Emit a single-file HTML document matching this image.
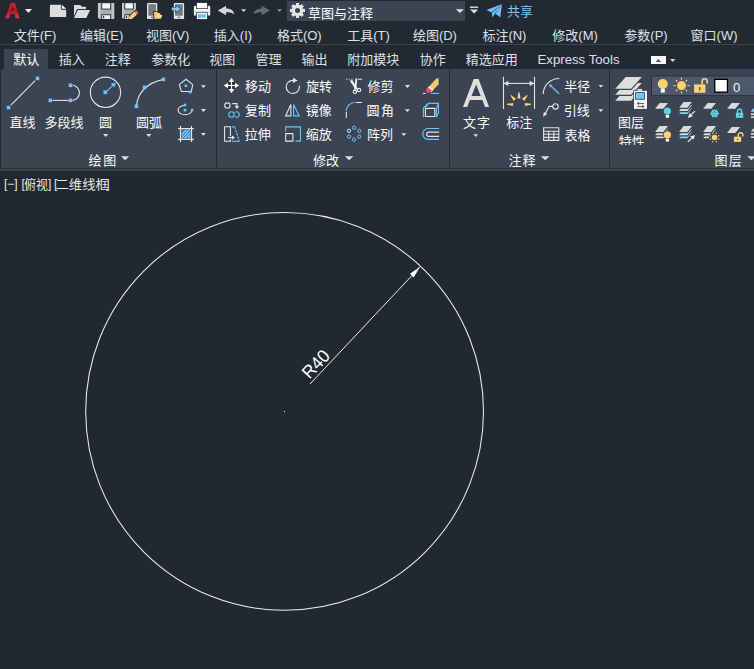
<!DOCTYPE html>
<html lang="zh"><head><meta charset="utf-8"><title>AutoCAD</title>
<style>
html,body{margin:0;padding:0;background:#212830;}
body{width:754px;height:669px;overflow:hidden;position:relative;font-family:"Liberation Sans","Noto Sans CJK SC",sans-serif;}
svg{position:absolute;left:0;top:0;display:block}
.t span{position:absolute;font-size:13px;line-height:14px;white-space:nowrap;color:transparent;opacity:0}
text{font-family:"Liberation Sans","Noto Sans CJK SC",sans-serif}
</style></head><body>
<div class="t"><span style="left:308px;top:5px">草图与注释</span><span style="left:507px;top:4px">共享</span><span style="left:14px;top:28px">文件(F)</span><span style="left:80px;top:28px">编辑(E)</span><span style="left:146px;top:28px">视图(V)</span><span style="left:214px;top:28px">插入(I)</span><span style="left:277px;top:28px">格式(O)</span><span style="left:348px;top:28px">工具(T)</span><span style="left:413px;top:28px">绘图(D)</span><span style="left:482px;top:28px">标注(N)</span><span style="left:552px;top:28px">修改(M)</span><span style="left:624px;top:28px">参数(P)</span><span style="left:691px;top:28px">窗口(W)</span><span style="left:13px;top:51px">默认</span><span style="left:59px;top:51px">插入</span><span style="left:105px;top:51px">注释</span><span style="left:152px;top:51px">参数化</span><span style="left:210px;top:51px">视图</span><span style="left:256px;top:51px">管理</span><span style="left:302px;top:51px">输出</span><span style="left:348px;top:51px">附加模块</span><span style="left:420px;top:51px">协作</span><span style="left:466px;top:51px">精选应用</span><span style="left:538px;top:51px">Express Tools</span><span style="left:10px;top:115px">直线</span><span style="left:45px;top:115px">多段线</span><span style="left:100px;top:115px">圆</span><span style="left:137px;top:115px">圆弧</span><span style="left:89px;top:153px">绘图</span><span style="left:245px;top:79px">移动</span><span style="left:245px;top:103px">复制</span><span style="left:245px;top:127px">拉伸</span><span style="left:306px;top:79px">旋转</span><span style="left:306px;top:103px">镜像</span><span style="left:306px;top:127px">缩放</span><span style="left:367px;top:79px">修剪</span><span style="left:367px;top:103px">圆角</span><span style="left:367px;top:127px">阵列</span><span style="left:313px;top:153px">修改</span><span style="left:463px;top:116px">文字</span><span style="left:506px;top:116px">标注</span><span style="left:565px;top:79px">半径</span><span style="left:565px;top:103px">引线</span><span style="left:565px;top:127px">表格</span><span style="left:509px;top:153px">注释</span><span style="left:619px;top:115px">图层</span><span style="left:619px;top:134px">特性</span><span style="left:733px;top:81px">0</span><span style="left:715px;top:153px">图层</span><span style="left:4px;top:177px">[−][俯视][二维线框]</span><span style="left:300px;top:360px">R40</span></div>
<svg width="754" height="669" viewBox="0 0 754 669">
<rect x="0" y="0" width="754" height="669" fill="#212830"/><rect x="0" y="0" width="754" height="69" fill="#222933"/><rect x="0" y="44" width="754" height="1" fill="#3a4352"/><rect x="0" y="69" width="754" height="102" fill="#3b4453"/><rect x="0" y="69" width="1" height="99" fill="#222933"/><rect x="0" y="168" width="754" height="1" fill="#2a313d"/><rect x="216" y="70" width="1" height="97" fill="#222933"/><rect x="449" y="70" width="1" height="97" fill="#222933"/><rect x="609" y="70" width="1" height="97" fill="#222933"/><rect x="4" y="49" width="44" height="21" fill="#3b4453"/><linearGradient id="lg" x1="0" y1="0" x2="0" y2="1"><stop offset="0" stop-color="#cf2029"/><stop offset=".55" stop-color="#b01a24"/><stop offset="1" stop-color="#d43c47"/></linearGradient><path fill-rule="evenodd" d="M5.3 18.2L10.6 3.1H15.1L19.5 18.2H15.7L14.6 14H10.3L9.1 18.2ZM11 10.5L12.5 6.3L13.9 10.3Z" fill="url(#lg)"/><path d="M24.9 9.1H32L28.45 13.1Z" fill="#e6e6e6"/><path d="M49.9 4.8H61.2V9.7H66.2V17.1H49.9Z" fill="#dcdcdc"/><path d="M62 4.9L66.2 8.7H62Z" fill="#fafafa"/><path d="M74 16.5V5H80.2L82 6.7H86V9.2H77Z" fill="#dcdcdc"/><path d="M77.2 9.2H91.2L87 18.7H73.2L74.4 16Z" fill="#222933"/><path d="M77.8 10H90.1L86.3 18H74Z" fill="#dedede"/><path d="M97.9 2.9h16.4v16.1H99.5L97.9 17.4z" fill="#c6c6c6"/><rect x="100.30000000000001" y="2.9" width="11.599999999999998" height="16.1" fill="#adadad"/><rect x="101.3" y="2.9" width="9.8" height="6.6" fill="#262c36"/><rect x="102.2" y="3.2" width="8" height="5.4" fill="#f6f6f6"/><rect x="101.3" y="14.3" width="9.8" height="4.7" fill="#262c36"/><rect x="102.2" y="15.2" width="8" height="3.8" fill="#f2f2f2"/><rect x="103.10000000000001" y="15.9" width="1.1" height="2.4" fill="#2a2a2a"/><path d="M122 2.9h14v16.1H123.6L122 17.4z" fill="#c6c6c6"/><rect x="124.4" y="2.9" width="9.2" height="16.1" fill="#adadad"/><rect x="124.3" y="2.9" width="9.5" height="6.6" fill="#262c36"/><rect x="125.2" y="3.2" width="7.7" height="5.4" fill="#f6f6f6"/><rect x="124.3" y="14.3" width="6.8" height="4.7" fill="#262c36"/><rect x="125.2" y="15.2" width="5" height="3.8" fill="#f2f2f2"/><rect x="126.10000000000001" y="15.9" width="1.1" height="2.4" fill="#2a2a2a"/><path d="M130.6 19.2H136.3V13.2Z" fill="#222933"/><g transform="translate(128.9 19.2) rotate(-42)"><path d="M-.6 0l3-2.7h9.4v5.4h-9.4z" fill="#262c36"/><path d="M.3 0l2.4-1.9h6.6v3.8H2.7z" fill="#f6cd6e"/><path d="M9.3-1.9h2.2v3.8H9.3z" fill="#f25562"/><path d="M.3 0l1.5-1.2v2.4z" fill="#fff"/></g><rect x="147" y="2.9" width="10.3" height="16.2" rx="1.2" fill="#e4e4e4"/><rect x="148.3" y="4.2" width="7.7" height="11.5" fill="#7a7a7a"/><rect x="150.9" y="16.8" width="2.5" height="1" rx=".5" fill="#444"/><path d="M153.3 19.6v-8.4h4.2l1 1.1h2.6v2.1h2.4l-2 5.2z" fill="#222933"/><path d="M154.1 18.8v-6.9h3l1 1.1h2.2v1.9h-4.5z" fill="#f3cf74"/><path d="M155.9 15h6.5l-1.5 3.8h-6.7z" fill="#f9da86"/><rect x="173.8" y="2.9" width="10.3" height="16.2" rx="1.2" fill="#e4e4e4"/><rect x="175.10000000000002" y="4.2" width="7.7" height="11.5" fill="#7a7a7a"/><rect x="177.70000000000002" y="16.8" width="2.5" height="1" rx=".5" fill="#444"/><path d="M171.2 6.9h4.3v-2l6.3 4.1-6.3 4.1v-2h-4.3z" fill="#222933"/><path d="M171.8 7.5h4.4v-1.6l4.7 3.1-4.7 3.1v-1.6h-4.4z" fill="#79cdfd"/><path d="M193.9 7q0-1.3 1.3-1.3h13.7q1.3 0 1.3 1.3v8.6h-16.3z" fill="#f4f4f4"/><rect x="193.9" y="10.8" width="16.3" height="1.9" fill="#dedede"/><rect x="196.2" y="2.4" width="11.6" height="6.6" fill="#222933"/><rect x="196.9" y="2.9" width="10.2" height="5.4" fill="#fbfbfb"/><rect x="196.1" y="12.4" width="11.7" height="7.2" fill="#222933"/><rect x="196.8" y="13" width="10.3" height="6.1" fill="#fbfbfb"/><rect x="198.1" y="14.1" width="7.9" height="3.7" fill="#72c4fb"/><path d="M217.9 10.5l8.2-4.7v2.6c5 .1 7.6 1.8 8.2 6.2-1.8-1.8-4-2.3-8.2-2.3v2.9z" fill="#d6d6d6"/><path d="M241 9.2H246.3L243.65 12Z" fill="#d4d4d4"/><path d="M269.9 10.5l-8.2-4.7v2.6c-5 .1-7.6 1.8-8.2 6.2 1.8-1.8 4-2.3 8.2-2.3v2.9z" fill="#626b7a"/><path d="M277 9.2H282L279.5 12Z" fill="#8a909c"/><rect x="287" y="1" width="178" height="20" fill="#3b4453"/><circle cx="297.5" cy="10.5" r="6.5" fill="none" stroke="#272e3b" stroke-width="2.2"/><rect x="-1.7" y="-7.5" width="3.4" height="4" transform="translate(297.5 10.5) rotate(0)" fill="#e4e4e4"/><rect x="-1.7" y="-7.5" width="3.4" height="4" transform="translate(297.5 10.5) rotate(45)" fill="#e4e4e4"/><rect x="-1.7" y="-7.5" width="3.4" height="4" transform="translate(297.5 10.5) rotate(90)" fill="#e4e4e4"/><rect x="-1.7" y="-7.5" width="3.4" height="4" transform="translate(297.5 10.5) rotate(135)" fill="#e4e4e4"/><rect x="-1.7" y="-7.5" width="3.4" height="4" transform="translate(297.5 10.5) rotate(180)" fill="#e4e4e4"/><rect x="-1.7" y="-7.5" width="3.4" height="4" transform="translate(297.5 10.5) rotate(225)" fill="#e4e4e4"/><rect x="-1.7" y="-7.5" width="3.4" height="4" transform="translate(297.5 10.5) rotate(270)" fill="#e4e4e4"/><rect x="-1.7" y="-7.5" width="3.4" height="4" transform="translate(297.5 10.5) rotate(315)" fill="#e4e4e4"/><circle cx="297.5" cy="10.5" r="4.1" fill="none" stroke="#e4e4e4" stroke-width="3.2"/><text x="307.9" y="17.8" font-size="13" fill="#ffffff">草图与注释</text><path d="M455.9 9.2H463.9L459.9 13Z" fill="#e0e0e0"/><rect x="470" y="6.5" width="8.2" height="1.4" fill="#e0e0e0"/><path d="M470 9.4H478.2L474.1 13.5Z" fill="#e0e0e0"/><path d="M502 4L486.5 10L491.3 12.5Z M502 4.3L491.8 13.1L492.3 17.5L494.9 13.7Z M502 4.5L495.5 13.6L500.2 17.5Z" fill="#6cc2f8"/><text x="506.9" y="16.05" font-size="13" fill="#7ccaf8">共享</text><text x="13.7" y="40.15" font-size="13" fill="#dde1e6">文件(F)</text><text x="79.9" y="40.15" font-size="13" fill="#dde1e6">编辑(E)</text><text x="146" y="40.15" font-size="13" fill="#dde1e6">视图(V)</text><text x="213.8" y="40.15" font-size="13" fill="#dde1e6">插入(I)</text><text x="276.9" y="40.15" font-size="13" fill="#dde1e6">格式(O)</text><text x="347.2" y="40.15" font-size="13" fill="#dde1e6">工具(T)</text><text x="412.9" y="40.15" font-size="13" fill="#dde1e6">绘图(D)</text><text x="482.4" y="40.15" font-size="13" fill="#dde1e6">标注(N)</text><text x="552.3" y="40.15" font-size="13" fill="#dde1e6">修改(M)</text><text x="624.3" y="40.15" font-size="13" fill="#dde1e6">参数(P)</text><text x="690.6" y="40.15" font-size="13" fill="#dde1e6">窗口(W)</text><text x="13.2" y="63.9" font-size="13" fill="#ffffff">默认</text><text x="58.8" y="63.9" font-size="13" fill="#dde1e6">插入</text><text x="104.8" y="63.9" font-size="13" fill="#dde1e6">注释</text><text x="151.3" y="63.9" font-size="13" fill="#dde1e6">参数化</text><text x="209.3" y="63.9" font-size="13" fill="#dde1e6">视图</text><text x="255.6" y="63.9" font-size="13" fill="#dde1e6">管理</text><text x="301.4" y="63.9" font-size="13" fill="#dde1e6">输出</text><text x="347.3" y="63.9" font-size="13" fill="#dde1e6">附加模块</text><text x="419.7" y="63.9" font-size="13" fill="#dde1e6">协作</text><text x="465.8" y="63.9" font-size="13" fill="#dde1e6">精选应用</text><text x="537.5" y="63.9" font-size="13.3" fill="#dde1e6" textLength="82" lengthAdjust="spacingAndGlyphs">Express Tools</text><rect x="651" y="56" width="15" height="8" fill="#f8f8f8"/><path d="M655.8 61.9h5.4l-2.7-2.9z" fill="#555"/><path d="M670.1 59H675.3L672.7 62.1Z" fill="#d8d8d8"/><path d="M10.9 105.2L35.1 80.7" stroke="#e4e4e4" stroke-width="1.1" fill="none"/><rect x="35.7" y="76.6" width="3.6" height="3.6" fill="#6cc4ff"/><rect x="6.7" y="105.8" width="3.6" height="3.6" fill="#6cc4ff"/><text x="9.6" y="127.05" font-size="13" fill="#fbfbfb">直线</text><path d="M52.6 100.4L68.4 100.4" stroke="#e4e4e4" stroke-width="1.1" fill="none"/><path d="M72.7 100.4A7.6 7.6 0 0 0 72.7 85.3" stroke="#e4e4e4" stroke-width="1.1" fill="none"/><rect x="48.5" y="98.6" width="3.6" height="3.6" fill="#6cc4ff"/><rect x="68.7" y="98.6" width="3.6" height="3.6" fill="#6cc4ff"/><rect x="68.7" y="83.5" width="3.6" height="3.6" fill="#6cc4ff"/><text x="44.5" y="127.05" font-size="13" fill="#fbfbfb">多段线</text><circle cx="105.5" cy="92.3" r="15.15" fill="none" stroke="#e4e4e4" stroke-width="1.1"/><path d="M105.5 92.3L114.6 83.6" stroke="#6cc4ff" stroke-width="1.15" fill="none"/><path d="M115.6 82.7l-1.2 4.6-3.4-3.5z" stroke="#6cc4ff" stroke-width="0.3" fill="#6cc4ff"/><rect x="103.5" y="90.5" width="3.6" height="3.6" fill="#6cc4ff"/><text x="98.9" y="127.05" font-size="13" fill="#fbfbfb">圆</text><path d="M103.1 134.1H108.3L105.69999999999999 137Z" fill="#dde1e6"/><path d="M136.4 106.3Q138.5 85 163.4 79.4" stroke="#e4e4e4" stroke-width="1.1" fill="none"/><rect x="161.6" y="77.6" width="3.6" height="3.6" fill="#6cc4ff"/><rect x="142.7" y="85.6" width="3.6" height="3.6" fill="#6cc4ff"/><rect x="134.6" y="104.5" width="3.6" height="3.6" fill="#6cc4ff"/><text x="135.9" y="127.05" font-size="13" fill="#fbfbfb">圆弧</text><path d="M146.2 134.1H151.4L148.8 137Z" fill="#dde1e6"/><path d="M186.1 79.3L192.7 84.6L191.3 91.5H181.4L179.3 84.6Z" stroke="#e4e4e4" stroke-width="1.1" fill="none"/><rect x="184.6" y="84.5" width="2.6" height="2.6" fill="#6cc4ff"/><rect x="188.8" y="90.6" width="2.8" height="2.8" fill="#6cc4ff"/><path d="M200.9 85.2H205.9L203.4 87.9Z" fill="#dde1e6"/><path d="M185 105.5A7.0 4.6 0 1 0 192 110.1" stroke="#e4e4e4" stroke-width="1.1" fill="none"/><rect x="183.7" y="103.7" width="2.6" height="2.6" fill="#6cc4ff"/><rect x="183.7" y="108.8" width="2.6" height="2.6" fill="#6cc4ff"/><rect x="190.8" y="108.8" width="2.6" height="2.6" fill="#6cc4ff"/><path d="M200.9 109.1H205.9L203.4 111.9Z" fill="#dde1e6"/><rect x="181.6" y="129.6" width="8.8" height="8.8" fill="#3580c0"/><clipPath id="hc"><rect x="181.6" y="129.6" width="8.8" height="8.8"/></clipPath><g clip-path="url(#hc)" stroke="#9ad8ff" stroke-width="1.1"><path d="M178 139L187 129"/><path d="M181 139L190 129"/><path d="M184 139L193 129"/><path d="M187 139L196 129"/><path d="M190 139L199 129"/><path d="M193 139L202 129"/></g><path d="M180.5 126L180.5 142" stroke="#e4e4e4" stroke-width="1.2" fill="none"/><path d="M191.5 126L191.5 142" stroke="#e4e4e4" stroke-width="1.2" fill="none"/><path d="M178.1 128.6L193.9 128.6" stroke="#e4e4e4" stroke-width="1.2" fill="none"/><path d="M178.1 139.4L193.9 139.4" stroke="#e4e4e4" stroke-width="1.2" fill="none"/><path d="M200.9 133H205.9L203.4 135.8Z" fill="#dde1e6"/><text x="88.5" y="164.85" font-size="13" fill="#fbfbfb" textLength="27.7" lengthAdjust="spacing">绘图</text><path d="M121 156.2H129.2L125.1 160.3Z" fill="#dde1e6"/><rect x="228.2" y="82.2" width="6.6" height="6.6" fill="#232a36"/><path d="M231.5 77.8l2.8 4.2h-5.6zM231.5 93.2l2.8-4.2h-5.6zM223.8 85.5l4.2-2.8v5.6zM239.2 85.5l-4.2-2.8v5.6z" fill="#fafafa"/><rect x="230.9" y="81.9" width="1.2" height="7.2" fill="#fafafa"/><rect x="227.9" y="84.9" width="7.2" height="1.2" fill="#fafafa"/><text x="244.9" y="91.05" font-size="13" fill="#fbfbfb">移动</text><path d="M293.3 80.3A6.6 6.6 0 1 0 299.3 85.6" stroke="#e4e4e4" stroke-width="1.2" fill="none"/><path d="M293 77.8l4.7 2.6-4.7 2.7z" stroke="none" stroke-width="0" fill="#e4e4e4"/><text x="305.9" y="91.05" font-size="13" fill="#fbfbfb">旋转</text><circle cx="227.4" cy="105.6" r="2.7" fill="none" stroke="#e4e4e4" stroke-width="1.1"/><circle cx="231.5" cy="114.5" r="2.7" fill="none" stroke="#6cc4ff" stroke-width="1.1"/><path d="M235.2 112.2A2.7 2.7 0 1 1 235.2 116.8" fill="none" stroke="#6cc4ff" stroke-width="1.1"/><path d="M232.2 103.6H236.9V106.4" stroke="#e4e4e4" stroke-width="1.1" fill="none"/><path d="M234.6 106.1h4.6l-2.3 2.9z" stroke="none" stroke-width="0" fill="#e4e4e4"/><text x="244.9" y="115.15" font-size="13" fill="#fbfbfb">复制</text><path d="M290.9 104.6V115.9H285.6Z" stroke="#e4e4e4" stroke-width="1.1" fill="none"/><path d="M293.6 104.6V115.9H299.2Z" stroke="#6cc4ff" stroke-width="1.1" fill="none"/><text x="305.8" y="115.15" font-size="13" fill="#fbfbfb">镜像</text><path d="M230.4 136V126.7H224.6V141.3H230.4V139.2" stroke="#e4e4e4" stroke-width="1.1" fill="none"/><path d="M231.8 126.8H234.7" stroke="#6cc4ff" stroke-width="1.1" fill="none"/><path d="M234.7 126.8L239.3 141.2" stroke="#6cc4ff" stroke-width="1.1" fill="none" stroke-dasharray="2.4 1"/><path d="M239.5 141.3H231.8" stroke="#6cc4ff" stroke-width="1.1" fill="none"/><path d="M227.9 137.5L232 137.5" stroke="#e4e4e4" stroke-width="1.1" fill="none"/><path d="M231.8 135.3l3.2 2.2-3.2 2.2z" stroke="none" stroke-width="0" fill="#e4e4e4"/><text x="244.7" y="139.35" font-size="13" fill="#fbfbfb">拉伸</text><path d="M285.7 131.6V126.9H300.4V141.1H295.5" stroke="#6cc4ff" stroke-width="1.1" fill="none"/><path d="M285.7 133.6H292.9V141.1H285.7Z" stroke="#e4e4e4" stroke-width="1.1" fill="none"/><text x="305.8" y="139.35" font-size="13" fill="#fbfbfb">缩放</text><path d="M345.8 79.3H353.8" stroke="#6cc4ff" stroke-width="1.1" fill="none" stroke-dasharray="1.6 1"/><path d="M358.1 79.3L361.9 79.3" stroke="#e4e4e4" stroke-width="1.1" fill="none"/><path d="M349.6 80.4L352.4 80.2L357.6 88.4L355.6 89.4Z" stroke="none" stroke-width="0" fill="#f2f2f2"/><path d="M355.6 78.2L357.3 78.6L356.2 89.6L354.2 90Z" stroke="none" stroke-width="0" fill="#f2f2f2"/><circle cx="354.9" cy="91.8" r="1.7" fill="none" stroke="#f2f2f2" stroke-width="1.1"/><circle cx="359" cy="90.1" r="1.7" fill="none" stroke="#f2f2f2" stroke-width="1.1"/><text x="367.4" y="91.05" font-size="13" fill="#fbfbfb">修剪</text><path d="M404.8 85.1H410L407.4 87.9Z" fill="#dde1e6"/><path d="M346.3 110.8A8.4 8.4 0 0 1 354.9 102.5" stroke="#6cc4ff" stroke-width="1.2" fill="none"/><path d="M356 102.5L361.9 102.5" stroke="#e4e4e4" stroke-width="1.1" fill="none"/><path d="M346.3 111.8L346.3 117.9" stroke="#e4e4e4" stroke-width="1.1" fill="none"/><text x="366.6" y="115.05" font-size="13" fill="#fbfbfb" textLength="27.5" lengthAdjust="spacing">圆角</text><path d="M404.8 109.3H410L407.4 112.1Z" fill="#dde1e6"/><circle cx="354.1" cy="127.8" r="1.65" fill="none" stroke="#6cc4ff" stroke-width="1"/><circle cx="359.2" cy="130.8" r="1.65" fill="none" stroke="#6cc4ff" stroke-width="1"/><circle cx="359.2" cy="136.6" r="1.65" fill="none" stroke="#6cc4ff" stroke-width="1"/><circle cx="354.1" cy="139.6" r="1.65" fill="none" stroke="#6cc4ff" stroke-width="1"/><circle cx="349.0" cy="136.6" r="1.65" fill="none" stroke="#6cc4ff" stroke-width="1"/><circle cx="349.0" cy="130.8" r="1.65" fill="none" stroke="#e4e4e4" stroke-width="1"/><text x="366.9" y="139.15" font-size="13" fill="#fbfbfb">阵列</text><path d="M401.3 133.2H406.3L403.8 136Z" fill="#dde1e6"/><path d="M438.6 78.2V84.2L431.4 92L427.2 88.4L436.4 78.6Z" fill="#f6c968"/><path d="M429.2 86.2L433.4 89.8L431.6 91.8L427.4 88.2Z" fill="#fbfbfb"/><path d="M428.2 87.4L431.9 90.6L430.6 92.2Q428.4 93.6 426.6 92Q425 90.2 426.6 88.6Z" fill="#f0505c"/><path d="M430.9 93.4L439.1 93.4" stroke="#6cc4ff" stroke-width="1.1" fill="none"/><path d="M422.8 93.4L425.8 93.4" stroke="#e4e4e4" stroke-width="1.1" fill="none"/><path d="M423.4 117.2V108L428.2 103.4H438.4V113.2L436.2 117.2M436.4 116.6V108.6L438.4 103.6M428.4 103.6L425.6 107" stroke="#6cc4ff" stroke-width="1.1" fill="none"/><path d="M425.4 108.4H434.8V116.5H425.4Z" stroke="#e4e4e4" stroke-width="1.1" fill="none"/><path d="M439.1 128.5H428.2A5.45 5.45 0 0 0 428.2 139.4H439.1" stroke="#6cc4ff" stroke-width="1.2" fill="none"/><path d="M439.1 132.1H428.8A2.15 2.15 0 0 0 428.8 136.4H439.1" stroke="#e4e4e4" stroke-width="1.1" fill="none"/><text x="313.1" y="164.85" font-size="13" fill="#fbfbfb">修改</text><path d="M344.8 156.2H353.4L349.1 160.3Z" fill="#dde1e6"/><path fill-rule="evenodd" d="M463 106.9L473.7 78.9H478.6L489.1 106.9H485L482.4 100H469.9L467.2 106.9ZM471.5 96H480.7L476.1 84.6Z" fill="#dedede"/><text x="463" y="127.45" font-size="13" fill="#fbfbfb" textLength="26.9" lengthAdjust="spacing">文字</text><path d="M473.3 134.3H478.1L475.70000000000005 137Z" fill="#dde1e6"/><path d="M503.5 76.8L503.5 109" stroke="#e4e4e4" stroke-width="1.1" fill="none"/><path d="M534.5 76.8L534.5 109" stroke="#e4e4e4" stroke-width="1.1" fill="none"/><path d="M504 83.4L534 83.4" stroke="#e4e4e4" stroke-width="1.1" fill="none"/><path d="M503.9 83.4l4.4-2.6v5.2zM534.1 83.4l-4.4-2.6v5.2z" stroke="none" stroke-width="0" fill="#e4e4e4"/><path d="M519.5 92.2L520.6 98.4L517.4 98.4L518.5 92.2Z" fill="#f9cf70"/><path d="M527.6 95.6L524.3 101.0L522.0 98.8L527.0 95.0Z" fill="#f9cf70"/><path d="M511.0 95.0L516.0 98.8L513.7 101.0L510.4 95.6Z" fill="#f9cf70"/><path d="M531.1 104.7L524.9 105.9L524.9 102.9L531.1 103.8Z" fill="#f9cf70"/><path d="M506.9 103.8L513.1 102.9L513.1 105.9L506.9 104.7Z" fill="#f9cf70"/><text x="506.2" y="127.45" font-size="13" fill="#fbfbfb">标注</text><path d="M543.2 94A16 16 0 0 1 559.3 78.5" stroke="#e4e4e4" stroke-width="1.1" fill="none"/><path d="M550.2 85.3L559.1 93.8" stroke="#6cc4ff" stroke-width="1.2" fill="none"/><path d="M549 84.2l3.4.6-2.6 2.6z" stroke="none" stroke-width="0" fill="#6cc4ff"/><text x="564.2" y="91.25" font-size="13" fill="#fbfbfb">半径</text><path d="M598.5 84.9H603.3L600.9 87.6Z" fill="#dde1e6"/><circle cx="555.5" cy="106.4" r="2.7" fill="none" stroke="#e4e4e4" stroke-width="1.1"/><path d="M552.8 106.4H549.1L545 114" stroke="#e4e4e4" stroke-width="1.1" fill="none"/><path d="M543.1 116.8l.8-4.8 3.4 1.9z" stroke="none" stroke-width="0" fill="#e4e4e4"/><text x="563.7" y="115.15" font-size="13" fill="#fbfbfb">引线</text><path d="M598.5 109.3H603.3L600.9 112Z" fill="#dde1e6"/><path d="M543.6 127.8H558.8V140.4H543.6ZM543.6 131.2H558.8M543.6 134.3H558.8M543.6 137.4H558.8M548.7 131.2V140.4M553.8 131.2V140.4" stroke="#e4e4e4" stroke-width="1.1" fill="none"/><text x="564.4" y="139.55" font-size="13" fill="#fbfbfb">表格</text><text x="508.6" y="164.85" font-size="13" fill="#fbfbfb" textLength="26.9" lengthAdjust="spacing">注释</text><path d="M540.9 156.2H549.5L545.2 160.3Z" fill="#dde1e6"/><path d="M625.5 88.5H642.9L631.3 101.4H613.9Z" fill="#dedede" stroke="#3b4453" stroke-width="1.1"/><path d="M625.5 82.5H642.9L631.3 95.4H613.9Z" fill="#dedede" stroke="#3b4453" stroke-width="1.1"/><path d="M625.5 76.5H642.9L631.3 89.4H613.9Z" fill="#dedede" stroke="#3b4453" stroke-width="1.1"/><rect x="633.3" y="90.1" width="14.4" height="19.5" fill="#3b4453"/><rect x="637.9" y="88.9" width="4.1" height="2" fill="#dcdcdc"/><rect x="634" y="90.8" width="13" height="18.1" fill="#f4f4f4"/><rect x="635.2" y="92.2" width="9.6" height="7.5" fill="#2d3644"/><rect x="636" y="93" width="8" height="5.9" fill="#6fc5ff"/><path d="M644 103.5H637.4M639.2 102l-2 1.5 2 1.5M637.2 106.5H644M642.2 105l2 1.5-2 1.5" stroke="#555" stroke-width="0.9" fill="none"/><text x="618.1" y="126.85" font-size="13" fill="#fbfbfb">图层</text><clipPath id="lc"><rect x="610" y="130" width="40" height="15"/></clipPath><g clip-path="url(#lc)"><text x="618.7" y="146.15" font-size="13" fill="#fbfbfb">特性</text></g><rect x="651" y="75.5" width="103" height="20.6" fill="#2a303c"/><rect x="652" y="76.5" width="102" height="18.6" fill="#4d586c"/><circle cx="662.8" cy="84" r="5" fill="#ffd070"/><rect x="660.8" y="88.6" width="4" height="4.1" fill="#f4f4f4"/><circle cx="681.5" cy="85.6" r="4.5" fill="#ffd070"/><path d="M687.3 85.6L689.5 85.6" stroke="#ffd070" stroke-width="1.1"/><path d="M685.6 89.7L687.2 91.3" stroke="#ffd070" stroke-width="1.1"/><path d="M681.5 91.4L681.5 93.6" stroke="#ffd070" stroke-width="1.1"/><path d="M677.4 89.7L675.8 91.3" stroke="#ffd070" stroke-width="1.1"/><path d="M675.7 85.6L673.5 85.6" stroke="#ffd070" stroke-width="1.1"/><path d="M677.4 81.5L675.8 79.9" stroke="#ffd070" stroke-width="1.1"/><path d="M681.5 79.8L681.5 77.6" stroke="#ffd070" stroke-width="1.1"/><path d="M685.6 81.5L687.2 79.9" stroke="#ffd070" stroke-width="1.1"/><rect x="694.1" y="84.4" width="11.3" height="8.4" fill="#ffd070"/><path d="M702.2 84.4V81.3A2.5 2.5 0 0 1 707.2 81.3V83.4" stroke="#ffd070" stroke-width="1.6" fill="none"/><rect x="699" y="87" width="1.4" height="3.4" fill="#4d586c"/><rect x="714.1" y="78.7" width="14" height="14.1" fill="#000"/><rect x="715.4" y="80" width="11.4" height="11.5" fill="#fff"/><text x="732.9" y="91.6" font-size="13" fill="#f4f4f4">0</text><path d="M659.38 102.30H669.18L663.62 109.40H653.82Z" fill="#dadada" stroke="#3b4453" stroke-width="1.2" stroke-linejoin="miter"/><circle cx="667.4" cy="111.1" r="4.3" fill="#3b4453"/><circle cx="667.4" cy="111.1" r="3.6" fill="#5fd3e0"/><path d="M665.6999999999999 114.89999999999999h3.4v1.6q0 1.5-1.7 1.5t-1.7-1.5z" fill="#f6f6f6"/><path d="M683.38 107.60H693.18L687.62 114.70H677.82Z" fill="#8fd0ff" stroke="#3b4453" stroke-width="1.2" stroke-linejoin="miter"/><path d="M683.38 104.50H693.18L687.62 111.60H677.82Z" fill="#dadada" stroke="#3b4453" stroke-width="1.2" stroke-linejoin="miter"/><path d="M683.38 101.30H693.18L687.62 108.40H677.82Z" fill="#dadada" stroke="#3b4453" stroke-width="1.2" stroke-linejoin="miter"/><path d="M694.9 111.1L691.2 114.69" stroke="#f2f2f2" stroke-width="1.2" fill="none"/><path d="M687.90 117.90L689.60 113.05L692.80 116.34Z" fill="#f2f2f2"/><path d="M707.38 102.30H717.18L711.62 109.40H701.82Z" fill="#dadada" stroke="#3b4453" stroke-width="1.2" stroke-linejoin="miter"/><path d="M710.1 113.4L719.1 113.4" stroke="#5fd3e0" stroke-width="1.2"/><path d="M712.4 109.5L716.9 117.3" stroke="#5fd3e0" stroke-width="1.2"/><path d="M716.9 109.5L712.4 117.3" stroke="#5fd3e0" stroke-width="1.2"/><path d="M717.3 115.0L714.6 116.5L711.9 115.0L711.9 111.9L714.6 110.3L717.3 111.9Z" fill="none" stroke="#5fd3e0" stroke-width="1.5"/><path d="M731.38 102.30H741.18L735.62 109.40H725.82Z" fill="#dadada" stroke="#3b4453" stroke-width="1.2" stroke-linejoin="miter"/><rect x="735.9" y="112.7" width="7.3" height="5.2" fill="#5fd3e0"/><path d="M737.5 112.9V111.3A2.05 2.05 0 0 1 741.6 111.3V112.9" stroke="#5fd3e0" stroke-width="1.4" fill="none"/><rect x="739.1" y="114.7" width="1" height="1.2" fill="#3b4453"/><path d="M754 108.5h-.8l-2.6 3.3h3.4z" fill="#8fd0ff"/><rect x="750.9" y="113.4" width="3.1" height="1.6" fill="#dadada"/><rect x="750.9" y="116.3" width="3.1" height="1.6" fill="#dadada"/><path d="M659.38 131.80H669.18L663.62 138.90H653.82Z" fill="#dadada" stroke="#3b4453" stroke-width="1.2" stroke-linejoin="miter"/><path d="M659.38 128.70H669.18L663.62 135.80H653.82Z" fill="#dadada" stroke="#3b4453" stroke-width="1.2" stroke-linejoin="miter"/><path d="M659.38 125.50H669.18L663.62 132.60H653.82Z" fill="#dadada" stroke="#3b4453" stroke-width="1.2" stroke-linejoin="miter"/><circle cx="667.4" cy="134.9" r="4.3" fill="#3b4453"/><circle cx="667.4" cy="134.9" r="3.6" fill="#ffd070"/><path d="M665.6999999999999 138.70000000000002h3.4v1.6q0 1.5-1.7 1.5t-1.7-1.5z" fill="#f6f6f6"/><path d="M683.38 131.80H693.18L687.62 138.90H677.82Z" fill="#8fd0ff" stroke="#3b4453" stroke-width="1.2" stroke-linejoin="miter"/><path d="M683.38 128.70H693.18L687.62 135.80H677.82Z" fill="#dadada" stroke="#3b4453" stroke-width="1.2" stroke-linejoin="miter"/><path d="M683.38 125.50H693.18L687.62 132.60H677.82Z" fill="#dadada" stroke="#3b4453" stroke-width="1.2" stroke-linejoin="miter"/><path d="M687.9 141.9L691.72 138.13" stroke="#f2f2f2" stroke-width="1.2" fill="none"/><path d="M695.00 134.90L693.34 139.77L690.11 136.49Z" fill="#f2f2f2"/><path d="M707.38 131.80H717.18L711.62 138.90H701.82Z" fill="#dadada" stroke="#3b4453" stroke-width="1.2" stroke-linejoin="miter"/><path d="M707.38 128.70H717.18L711.62 135.80H701.82Z" fill="#dadada" stroke="#3b4453" stroke-width="1.2" stroke-linejoin="miter"/><path d="M707.38 125.50H717.18L711.62 132.60H701.82Z" fill="#dadada" stroke="#3b4453" stroke-width="1.2" stroke-linejoin="miter"/><circle cx="714.6" cy="137.5" r="5.6" fill="#3b4453"/><circle cx="714.6" cy="137.5" r="2.8" fill="#ffd070"/><circle cx="718.8" cy="139.3" r=".7" fill="#ffd070"/><circle cx="716.4" cy="141.7" r=".7" fill="#ffd070"/><circle cx="712.8" cy="141.7" r=".7" fill="#ffd070"/><circle cx="710.4" cy="139.3" r=".7" fill="#ffd070"/><circle cx="710.4" cy="135.7" r=".7" fill="#ffd070"/><circle cx="712.8" cy="133.3" r=".7" fill="#ffd070"/><circle cx="716.4" cy="133.3" r=".7" fill="#ffd070"/><circle cx="718.8" cy="135.7" r=".7" fill="#ffd070"/><path d="M731.38 126.50H741.18L735.62 133.60H725.82Z" fill="#dadada" stroke="#3b4453" stroke-width="1.2" stroke-linejoin="miter"/><rect x="733.9" y="136.7" width="7.3" height="5.2" fill="#ffd070"/><path d="M738.1 136.89999999999998V135.1A2.4 2.4 0 0 1 742.9 135.1V136.5" stroke="#ffd070" stroke-width="1.4" fill="none"/><rect x="737.1" y="138.7" width="1" height="1.2" fill="#3b4453"/><path d="M754 128.5h-.6l-2.4 2.9h3z" fill="#dadada"/><rect x="750.9" y="133.2" width="3.1" height="1.6" fill="#dadada"/><rect x="750.9" y="136.4" width="3.1" height="1.6" fill="#dadada"/><text x="714.6" y="164.65" font-size="13" fill="#fbfbfb" textLength="27.2" lengthAdjust="spacing">图层</text><path d="M747.3 156.2H755.5L751.4 160.3Z" fill="#dde1e6"/><text x="4" y="188.2" font-size="12" fill="#e9e9e9">[−]</text><text x="21.5" y="188.2" font-size="12" fill="#e9e9e9">[</text><text x="24.2" y="189.39" font-size="13" fill="#e9e9e9" textLength="23.7" lengthAdjust="spacingAndGlyphs">俯视</text><text x="47.9" y="188.2" font-size="12" fill="#e9e9e9">]</text><text x="54.1" y="188.2" font-size="12" fill="#e9e9e9">[</text><text x="55.5" y="189.39" font-size="13" fill="#e9e9e9" textLength="53.3" lengthAdjust="spacingAndGlyphs">二维线框</text><text x="106.3" y="188.2" font-size="12" fill="#e9e9e9">]</text><circle cx="284.6" cy="411.4" r="198.9" fill="none" stroke="#ececec" stroke-width="1.05"/><rect x="284" y="411" width="1" height="1" fill="#e0e0e0"/><path d="M310 384L412.2 275.3" stroke="#ececec" stroke-width="1" fill="none"/><path d="M420.5 266.3L410.1 273.7L413.6 277.4Z" fill="#ffffff"/><text transform="translate(309.5 379.7) rotate(-46.8)" x="0" y="0" font-size="18" fill="#ffffff" textLength="31.6" lengthAdjust="spacingAndGlyphs">R40</text>
</svg>
</body></html>
